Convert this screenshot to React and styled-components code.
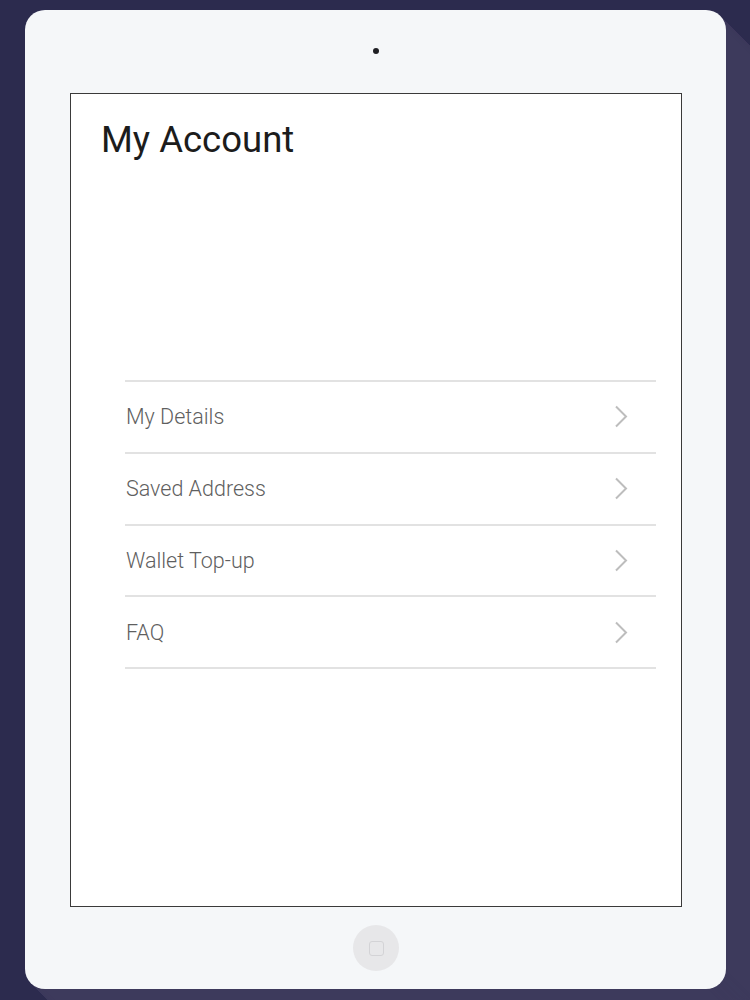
import React from "react";
import styled, { createGlobalStyle } from "styled-components";

const longShadow = Array.from({ length: 320 }, (_, i) => `${i + 1}px ${i + 1}px 0 #3d3a5c`).join(", ");

const GlobalStyle = createGlobalStyle`
  html, body {
    margin: 0;
    padding: 0;
    background: #2c2b4e;
    overflow: hidden;
  }
  body {
    font-family: Roboto, "Liberation Sans", sans-serif;
  }
`;

const Page = styled.div`
  width: 750px;
  height: 1000px;
  padding: 10px 0 0 25px;
  box-sizing: border-box;
`;

const Tablet = styled.div`
  width: 701px;
  height: 979px;
  background: #f5f7f9;
  border-radius: 20px;
  box-shadow: ${longShadow};
  display: flex;
  flex-direction: column;
  align-items: flex-start;
  box-sizing: border-box;
  padding-left: 45px;
`;

const CameraBar = styled.div`
  height: 83px;
  width: 612px;
  display: flex;
  align-items: center;
  justify-content: center;
  padding-bottom: 2px;
  box-sizing: border-box;
`;

const Camera = styled.div`
  width: 6px;
  height: 6px;
  border-radius: 50%;
  background: #1f1f24;
`;

const Screen = styled.div`
  width: 612px;
  height: 814px;
  box-sizing: border-box;
  background: #fff;
  border: 1px solid #3a3a3a;
  padding: 28px 25px 0 30px;
  display: flex;
  flex-direction: column;
`;

const Title = styled.h1`
  margin: 0;
  font-size: 36.5px;
  line-height: 36px;
  font-weight: 400;
  color: #1c1c1c;
`;

const Menu = styled.ul`
  list-style: none;
  margin: 222px 0 0 24px;
  padding: 0;
  border-top: 2px solid #e2e2e2;
`;

const Item = styled.li`
  height: 69.75px;
  display: flex;
  align-items: center;
  justify-content: space-between;
  border-bottom: 2px solid #e2e2e2;
  padding: 0 28px 0 1px;
`;

const Label = styled.span`
  font-size: 21.5px;
  font-weight: 300;
  color: #5f5f5f;
`;

const Chevron = styled.svg`
  width: 14px;
  height: 23px;
  fill: none;
  stroke: #bdbdbd;
  stroke-width: 2px;
`;

const HomeBar = styled.div`
  width: 612px;
  height: 82px;
  display: flex;
  align-items: center;
  justify-content: center;
`;

const HomeButton = styled.div`
  width: 46px;
  height: 46px;
  border-radius: 50%;
  background: #e7e7e9;
  display: flex;
  align-items: center;
  justify-content: center;
`;

const HomeSquare = styled.div`
  width: 13px;
  height: 13px;
  border-radius: 3px;
  border: 1.5px solid #d3d3d6;
`;

const items = ["My Details", "Saved Address", "Wallet Top-up", "FAQ"];

export default function App() {
  return (
    <>
      <GlobalStyle />
      <Page>
        <Tablet>
          <CameraBar>
            <Camera />
          </CameraBar>
          <Screen>
            <Title>My Account</Title>
            <Menu>
              {items.map((item) => (
                <Item key={item}>
                  <Label>{item}</Label>
                  <Chevron viewBox="0 0 14 23">
                    <polyline points="2 1.5 12 11.5 2 21.5" />
                  </Chevron>
                </Item>
              ))}
            </Menu>
          </Screen>
          <HomeBar>
            <HomeButton>
              <HomeSquare />
            </HomeButton>
          </HomeBar>
        </Tablet>
      </Page>
    </>
  );
}
